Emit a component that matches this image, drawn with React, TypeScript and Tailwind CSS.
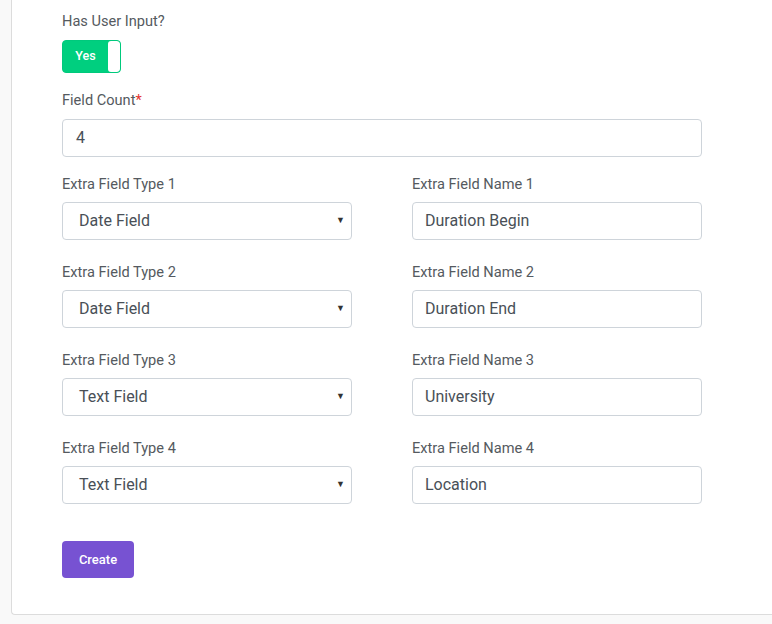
import React from 'react'

const rows = [
  { type: 'Date Field', name: 'Duration Begin' },
  { type: 'Date Field', name: 'Duration End' },
  { type: 'Text Field', name: 'University' },
  { type: 'Text Field', name: 'Location' },
]

const labelCls = 'block text-[14.6px] leading-[20px] text-[#555a60]'
const boxCls =
  'flex items-center h-[38px] rounded-[4px] border border-[#ced4da] bg-white text-[16px] text-[#495057]'

export default function App() {
  return (
    <div
      className="w-[772px] h-[624px] overflow-hidden bg-[#f9f9f9]"
      style={{ fontFamily: 'Roboto, "Liberation Sans", sans-serif' }}
    >
      <div className="ml-[11px] w-[800px] bg-white border-l border-b border-[#dcdcdc] rounded-bl-[4px] pl-[50px] pt-[11px] pb-[36px]">
        {/* Has user input */}
        <label className={labelCls}>Has User Input?</label>
        <div className="mt-[9px] flex w-[59px] h-[33px] rounded-[4px] border border-[#00c97c] bg-[#00cf7f] overflow-hidden">
          <div className="flex-1 flex items-center justify-center text-white text-[12.5px] font-medium">Yes</div>
          <div className="w-[12px] bg-white rounded-[3px]" />
        </div>

        {/* Field count */}
        <label className={`${labelCls} mt-[17px]`}>
          Field Count<span className="text-[#e3342f]">*</span>
        </label>
        <div className={`${boxCls} mt-[9px] w-[640px] pl-[13px]`}>4</div>

        {/* Extra fields */}
        <div className="mt-[17px] flex flex-col gap-[22px] w-[640px]">
          {rows.map((r, i) => (
            <div key={i} className="grid grid-cols-2 gap-[60px]">
              <div>
                <label className={labelCls}>Extra Field Type {i + 1}</label>
                <div className={`${boxCls} mt-[8px] pl-[16px] pr-[6px] justify-between`}>
                  <span>{r.type}</span>
                  <span className="text-[9px] text-[#333]">▼</span>
                </div>
              </div>
              <div>
                <label className={labelCls}>Extra Field Name {i + 1}</label>
                <div className={`${boxCls} mt-[8px] pl-[12px]`}>{r.name}</div>
              </div>
            </div>
          ))}
        </div>

        <button className="mt-[37px] w-[72px] h-[37px] rounded-[4px] bg-[#7752d2] text-white text-[13px] font-medium">
          Create
        </button>
      </div>
    </div>
  )
}
